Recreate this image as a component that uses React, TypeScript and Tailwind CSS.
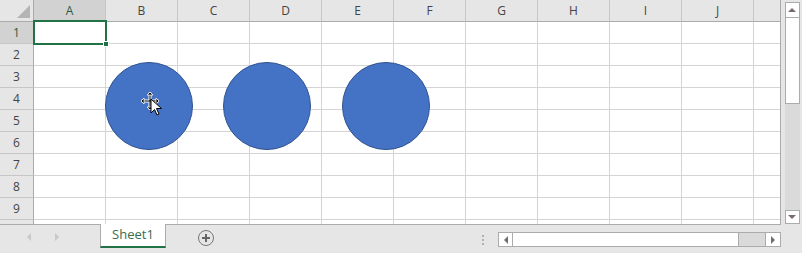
import React from "react";

const cols = ["A", "B", "C", "D", "E", "F", "G", "H", "I", "J", ""];
const rows = [1, 2, 3, 4, 5, 6, 7, 8, 9, 10];

// circle shapes sit on the sheet canvas, so they are placed by coordinates
const shapes = [
  { left: 105, top: 62 },
  { left: 223, top: 62 },
  { left: 342, top: 62 },
];

function MoveCursor() {
  return (
    <svg width="22" height="26" viewBox="0 0 22 26" className="absolute left-[140px] top-[91px]">
      <g stroke="#fff" strokeWidth="3" strokeLinecap="square" fill="none">
        <path d="M10 3v14M3 10h14" />
      </g>
      <g stroke="#000" strokeWidth="1" fill="none">
        <path d="M10 3v14M3 10h14" />
      </g>
      <path d="M10 1l3 3H7zM10 19l3-3H7zM1 10l3-3v6zM19 10l-3-3v6z" fill="#000" stroke="#fff" strokeWidth="0.8" />
      <path d="M11 8v14l3.5-3.5 2.5 5.5 2-1-2.5-5.5h5z" fill="#fff" stroke="#000" strokeWidth="1" strokeLinejoin="round" />
    </svg>
  );
}

export default function App() {
  return (
    <div className="w-[802px] h-[253px] bg-[#e6e6e6] overflow-hidden flex flex-col" style={{ fontFamily: '"Open Sans", "Liberation Sans", sans-serif' }}>
      <div className="flex h-[225px]">
        {/* sheet */}
        <div className="relative w-[781px] h-[225px] overflow-hidden bg-white border-r border-b border-[#ababab]">
          <div className="grid grid-cols-[34px_repeat(10,72px)_100px] grid-rows-[22px_repeat(10,22px)]">
            <div className="bg-[#e6e6e6] border-r border-b border-[#ababab] relative">
              <div className="absolute right-[3px] bottom-[3px] w-0 h-0 border-l-[13px] border-l-transparent border-b-[13px] border-b-[#b4b4b4]" />
            </div>
            {cols.map((c, i) => (
              <div
                key={"h" + i}
                className={`flex items-center justify-center text-[12px] border-r border-b border-r-[#c6c6c6] border-b-[#ababab] ${i === 0 ? "bg-[#d2d2d2] text-[#2b5a3f]" : "bg-[#e6e6e6] text-[#444]"}`}
              >
                {c}
              </div>
            ))}
            {rows.map((r) => (
              <React.Fragment key={r}>
                <div
                  className={`flex items-center justify-center text-[12px] border-r border-b border-r-[#ababab] border-b-[#c6c6c6] ${r === 1 ? "bg-[#d2d2d2] text-[#2b5a3f]" : "bg-[#e6e6e6] text-[#444]"}`}
                >
                  {r < 10 ? r : ""}
                </div>
                {cols.map((_, i) => (
                  <div key={i} className="border-r border-b border-[#d4d4d4]" />
                ))}
              </React.Fragment>
            ))}
          </div>

          {/* selected cell */}
          <div className="absolute left-[33px] top-[20px] w-[74px] h-[25px] border-2 border-[#217346]">
            <div className="absolute -right-[4px] -bottom-[4px] w-[6px] h-[6px] bg-[#217346] border border-white" />
          </div>

          {shapes.map((s, i) => (
            <div
              key={i}
              className="absolute w-[88px] h-[88px] rounded-full bg-[#4472c4] border border-[#2f528f]"
              style={{ left: s.left, top: s.top }}
            />
          ))}
          <MoveCursor />
        </div>

        {/* vertical scrollbar */}
        <div className="w-[21px] h-[225px] flex flex-col items-center pt-[2px] pb-[1px] pl-[1px]">
          <div className="w-[15px] h-[16px] bg-white border border-[#ababab] flex items-center justify-center">
            <div className="w-0 h-0 border-l-[4px] border-r-[4px] border-b-[4px] border-l-transparent border-r-transparent border-b-[#776b6b]" />
          </div>
          <div className="w-[15px] h-[86px] bg-white border-x border-b border-[#ababab]" />
          <div className="flex-1 w-[15px] bg-[#dadada]" />
          <div className="w-[15px] h-[14px] bg-white border border-[#ababab] flex items-center justify-center">
            <div className="w-0 h-0 border-l-[4px] border-r-[4px] border-t-[4px] border-l-transparent border-r-transparent border-t-[#776b6b]" />
          </div>
        </div>
      </div>

      {/* bottom bar */}
      <div className="flex-1 flex items-start relative">
        <div className="w-[100px] h-[24px] flex items-center">
          <div className="ml-[27px] w-0 h-0 border-t-[4px] border-b-[4px] border-r-[4px] border-t-transparent border-b-transparent border-r-[#c8c8c8]" />
          <div className="ml-[24px] w-0 h-0 border-t-[4px] border-b-[4px] border-l-[4px] border-t-transparent border-b-transparent border-l-[#c8c8c8]" />
        </div>
        <div className="-mt-px w-[66px] h-[24px] bg-white border-x border-[#ababab] border-b-2 border-b-[#217346] flex items-center justify-center text-[13px]">
          <span className="text-[#3b6b50]">Sheet1</span>
        </div>
        <div className="ml-[32px] mt-[5px] w-[16px] h-[16px] rounded-full border-[1.5px] border-[#777] flex items-center justify-center">
          <svg width="10" height="10" viewBox="0 0 10 10">
            <path d="M5 1v8M1 5h8" stroke="#666" strokeWidth="2" />
          </svg>
        </div>
        <div className="ml-auto mr-[21px] flex items-center mt-[7px]">
          <div className="flex flex-col gap-[2px] mr-[14px]">
            <div className="w-[2px] h-[2px] bg-[#b0b0b0]" />
            <div className="w-[2px] h-[2px] bg-[#b0b0b0]" />
            <div className="w-[2px] h-[2px] bg-[#b0b0b0]" />
          </div>
          <div className="w-[283px] h-[15px] flex border border-[#ababab] bg-[#dadada]">
            <div className="w-[14px] bg-white border-r border-[#ababab] flex items-center justify-center">
              <div className="w-0 h-0 border-t-[4px] border-b-[4px] border-r-[4px] border-t-transparent border-b-transparent border-r-[#776b6b]" />
            </div>
            <div className="w-[226px] bg-white border-r border-[#ababab]" />
            <div className="flex-1" />
            <div className="w-[15px] bg-white border-l border-[#ababab] flex items-center justify-center">
              <div className="w-0 h-0 border-t-[4px] border-b-[4px] border-l-[4px] border-t-transparent border-b-transparent border-l-[#776b6b]" />
            </div>
          </div>
        </div>
      </div>
    </div>
  );
}
